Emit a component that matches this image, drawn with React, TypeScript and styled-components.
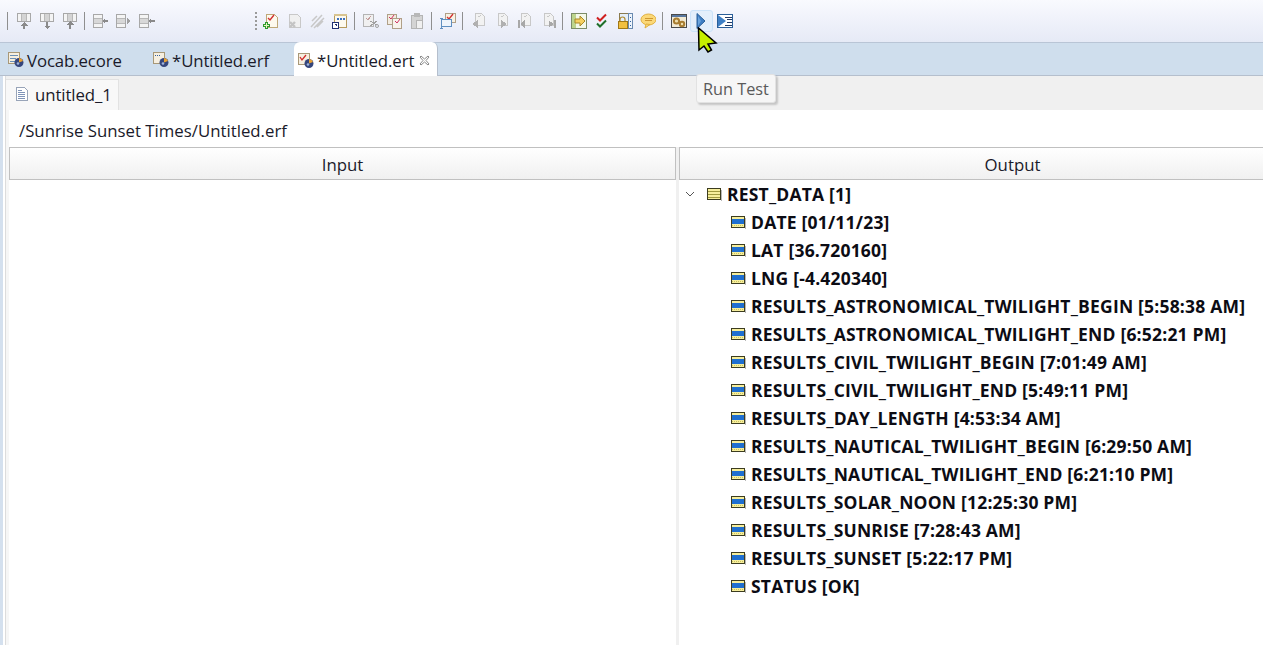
import React from 'react';
import styled, { createGlobalStyle } from 'styled-components';

const GlobalStyle = createGlobalStyle`
  html, body {
    margin: 0;
    padding: 0;
    background: #ffffff;
    overflow: hidden;
  }
  body {
    font-family: 'Open Sans', 'Noto Sans', sans-serif;
  }
`;

const Page = styled.div`
  position: relative;
  width: 1263px;
  height: 645px;
  overflow: hidden;
  display: flex;
  flex-direction: column;
`;

/* TOOLBAR */

const Toolbar = styled.div`
  height: 42px;
  display: flex;
  align-items: center;
  padding: 0 0 0 7px;
  background: linear-gradient(180deg, #f9fafe 0%, #f1f3fb 40%, #e6eaf6 100%);
  border-bottom: 1px solid #b9c5d6;
`;

const Sep = styled.div<{ $first?: boolean }>`
  width: 1px;
  height: 18px;
  background: #8f8f8f;
  margin: 0 4px 0 ${(p) => (p.$first ? '0' : '3px')};
`;

const Grip = styled.div`
  width: 2px;
  height: 18px;
  margin: 0 2px 0 97px;
  background: repeating-linear-gradient(180deg, #9a9a9a 0 2px, transparent 2px 4px);
`;

const ToolButton = styled.div<{ $hover?: boolean }>`
  width: 23px;
  height: 22px;
  box-sizing: border-box;
  display: flex;
  align-items: center;
  justify-content: center;
  border-radius: 3px;
  border: 1px solid ${(p) => (p.$hover ? '#cbe3f9' : 'transparent')};
  background: ${(p) => (p.$hover ? '#e3effb' : 'transparent')};
`;

const Svg = ({ children, size = 16 }: { children: React.ReactNode; size?: number }) => (
  <svg width={size} height={size} viewBox="0 0 16 16" shapeRendering="crispEdges">
    {children}
  </svg>
);

const ColumnsIcon = ({ kind }: { kind: 'up' | 'down' | 'top' }) => (
  <Svg>
    <rect x="1.500" y="0.500" width="13" height="8" fill="#f4f4f4" stroke="#a8a8a8" />
    <path d="M5.500 1v7M10.500 1v7" stroke="#b8b8b8" />
    <rect x="6" y="1" width="4" height="7" fill="#d4d4d4" />
    {kind === 'up' && <path d="M8 9l3.500 3.500H9V16H7v-3.500H4.500z" fill="#8a8a8a" />}
    {kind === 'down' && <path d="M7 9h2v3.500h2.500L8 16l-3.500-3.500H7z" fill="#8a8a8a" />}
    {kind === 'top' && <path d="M8 8l3.500 3.500H9V16H7v-4.500H4.500z" fill="#8a8a8a" />}
  </Svg>
);

const RowsIcon = ({ kind }: { kind: 'left' | 'right' | 'end' }) => (
  <Svg>
    <rect x="0.500" y="1.500" width="9" height="13" fill="#f4f4f4" stroke="#a8a8a8" />
    <path d="M1 5.500h8M1 10.500h8" stroke="#b8b8b8" />
    <rect x="1" y="6" width="8" height="4" fill="#d8d8d8" />
    {kind === 'left' && <path d="M9 8l3-3v2h3v2h-3v2z" fill="#8a8a8a" />}
    {kind === 'right' && <path d="M15 8l-4-3v6z" fill="#a0a0a0" />}
    {kind === 'end' && <path d="M9 8l3-3v2h4v2h-4v2z" fill="#8a8a8a" />}
  </Svg>
);

const PageBase = ({ gray, children }: { gray?: boolean; children?: React.ReactNode }) => (
  <>
    <path
      d="M3.500 1.500h8l3 3v10h-11z"
      fill={gray ? '#f0f0f0' : '#fdf9ee'}
      stroke={gray ? '#c8c8c8' : '#bfa878'}
    />
    {children}
  </>
);

const AddTestIcon = () => (
  <Svg>
    <PageBase />
    <path d="M5 5l2 2 4-5" fill="none" stroke="#d03030" strokeWidth="1.400" shapeRendering="auto" />
    <path d="M2 9h3v2h2v3H5v2H2v-2H0v-3h2z" fill="#2f9a2f" />
    <path d="M3 10h1v2h2v1H4v2H3v-2H1v-1h2z" fill="#e8f8c0" />
  </Svg>
);

const GrayDeleteIcon = () => (
  <Svg>
    <PageBase gray />
    <path d="M4 9l5 5M9 9l-5 5" stroke="#c4c4c4" strokeWidth="2.400" shapeRendering="auto" />
  </Svg>
);

const GrayFeatherIcon = () => (
  <Svg>
    <path
      d="M2 14L13 2M5 15l10-10M3 8l5-5M8 14l6-6"
      stroke="#c8c8c8"
      strokeWidth="1.500"
      fill="none"
      shapeRendering="auto"
    />
  </Svg>
);

const ImportPageIcon = () => (
  <Svg>
    <rect x="2.500" y="1.500" width="12" height="13" fill="#fdf9ee" stroke="#b69a5c" />
    <rect x="2" y="1" width="13" height="2" fill="#d8c490" />
    <rect x="5" y="5" width="2" height="2" fill="#3a6fc0" />
    <rect x="8" y="5" width="2" height="2" fill="#3a6fc0" />
    <rect x="11" y="5" width="2" height="2" fill="#3a6fc0" />
    <rect x="0.500" y="9.500" width="6" height="6" fill="#ffffff" stroke="#1f2f70" />
    <path d="M2 11h3v3z" fill="#1f2f70" />
  </Svg>
);

const GrayCutIcon = () => (
  <Svg>
    <rect x="0.500" y="1.500" width="10" height="12" fill="#f0f0f0" stroke="#b4b4b4" />
    <path d="M3 5l2 2 3-4" stroke="#c49a9a" fill="none" />
    <path d="M7 8l7 4M7 13l7-5" stroke="#a0a0a0" />
    <circle cx="14" cy="13" r="1.500" fill="none" stroke="#a0a0a0" shapeRendering="auto" />
  </Svg>
);

const CopyIcon = () => (
  <Svg>
    <rect x="1.500" y="1.500" width="9" height="10" fill="#f3ece0" stroke="#b0a088" />
    <rect x="6.500" y="5.500" width="9" height="10" fill="#f8f4ec" stroke="#b0a088" />
    <path d="M3 4l2 2 3-4M9 8l2 2 3-4" stroke="#d03060" fill="none" shapeRendering="auto" />
  </Svg>
);

const GrayPasteIcon = () => (
  <Svg>
    <rect x="2.500" y="2.500" width="11" height="13" fill="#d4d4d4" stroke="#b4b4b4" />
    <rect x="5" y="0" width="6" height="4" fill="#b8b8b8" />
    <rect x="7.500" y="7.500" width="6" height="8" fill="#f0f0f0" stroke="#b4b4b4" />
  </Svg>
);

const NewSuiteIcon = () => (
  <Svg>
    <rect x="5.500" y="0.500" width="10" height="9" fill="#f8f2e4" stroke="#b0a088" />
    <path d="M7 4l2 2 4-5" stroke="#d03030" fill="none" strokeWidth="1.300" shapeRendering="auto" />
    <rect x="1.500" y="6.500" width="10" height="7" fill="#eef4fb" stroke="#5f8fc0" />
    <path d="M0 5.500h3M1.500 5.500v10M0 15.500h3" stroke="#5f8fc0" />
  </Svg>
);

const NavIcon = ({ kind }: { kind: 'prev' | 'next' | 'first' | 'last' }) => (
  <Svg>
    <path d="M4.500 0.500h6l3 3v9h-9z" fill="#f2f2f2" stroke="#c8c8c8" />
    <path d="M7 3l1 1 2-2" stroke="#c8c8c8" fill="none" />
    {kind === 'prev' && <path d="M1 11l6-4v8z" fill="#b0b0b0" />}
    {kind === 'next' && <path d="M13 11L7 7v8z" fill="#b0b0b0" />}
    {kind === 'first' && <path d="M1 7h1.500v8H1zM3 11l5-4v8z" fill="#a8a8a8" />}
    {kind === 'last' && <path d="M14 7h1.500v8H14zM13.500 11l-5-4v8z" fill="#a8a8a8" />}
  </Svg>
);

const GotoIcon = () => (
  <Svg>
    <rect x="0.500" y="0.500" width="15" height="15" fill="#f4f8e8" stroke="#7c8c68" />
    <rect x="1" y="1" width="4" height="14" fill="#bcd48c" />
    <path d="M4 6h5V3l5 5-5 5v-3H4z" fill="#f6d060" stroke="#a88828" shapeRendering="auto" />
  </Svg>
);

const ChecksIcon = () => (
  <Svg>
    <path d="M3 4.500l3 3 6-6" stroke="#d02020" strokeWidth="2" fill="none" shapeRendering="auto" />
    <path d="M3 10.500l3 3 6-6" stroke="#1f6f2a" strokeWidth="2" fill="none" shapeRendering="auto" />
  </Svg>
);

const LockIcon = () => (
  <Svg>
    <rect x="2.500" y="0.500" width="9" height="9" fill="#e4eef8" stroke="#8a7a50" />
    <rect x="11.500" y="0.500" width="4" height="15" fill="#eef4fb" stroke="#6a8ab0" />
    <path d="M13 4h1M13 8h1M13 12h1" stroke="#3060a0" />
    <path
      d="M3 8V6.500a2.500 2.500 0 015 0V8"
      fill="none"
      stroke="#b08a30"
      strokeWidth="1.200"
      shapeRendering="auto"
    />
    <rect x="1" y="8" width="9" height="7" fill="#f2c040" stroke="#a07818" />
  </Svg>
);

const BubbleIcon = () => (
  <Svg>
    <ellipse cx="8.500" cy="6.500" rx="7.500" ry="5.500" fill="#fbd878" stroke="#e0b040" shapeRendering="auto" />
    <path d="M6 11l-1 4 5-3.500z" fill="#fbd878" stroke="#e0b040" shapeRendering="auto" />
    <path d="M5 5h8M5 7.500h7" stroke="#d09830" />
  </Svg>
);

const GearsIcon = () => (
  <Svg>
    <rect x="0.500" y="1.500" width="15" height="13" fill="#f2ead4" stroke="#4a4a4a" />
    <rect x="1" y="2" width="14" height="2" fill="#5a78a0" />
    <circle cx="5.500" cy="8" r="2.600" fill="#f0e0b0" stroke="#a87c30" strokeWidth="2" shapeRendering="auto" />
    <circle cx="11" cy="11" r="2.200" fill="#f0e0b0" stroke="#a87c30" strokeWidth="2" shapeRendering="auto" />
  </Svg>
);

const PlayIcon = () => (
  <Svg>
    <path d="M3 0.500L11 8 3 15.500z" fill="#3f7fc4" stroke="#2a6099" shapeRendering="auto" />
    <path d="M4 3v10l3-5z" fill="#6aa4dc" shapeRendering="auto" />
  </Svg>
);

const PlayListIcon = () => (
  <Svg>
    <rect x="0.500" y="1.500" width="15" height="13" fill="#ffffff" stroke="#2a5f99" />
    <path d="M1 2l8 6-8 6z" fill="#3f7fc4" shapeRendering="auto" />
    <path d="M8 4h7M10 6.500h5M10 9.500h5M8 12h7" stroke="#223a66" />
  </Svg>
);

/* EDITOR TABS */

const TabBar = styled.div`
  height: 33px;
  background: #cfdeed;
  border-bottom: 1px solid #b5bfcd;
  box-sizing: border-box;
  display: flex;
  align-items: flex-end;
  padding-left: 3px;
`;

const EditorTab = styled.div<{ $active?: boolean; $w: number }>`
  width: ${(p) => p.$w}px;
  height: 33px;
  box-sizing: border-box;
  display: flex;
  align-items: center;
  gap: 3px;
  padding: 3px 0 0 ${(p) => (p.$active ? 4 : 5)}px;
  font-size: 16.800px;
  letter-spacing: -0.100px;
  color: #1a1a2a;
  background: ${(p) => (p.$active ? '#ffffff' : 'transparent')};
  border-radius: ${(p) => (p.$active ? '6px 6px 0 0' : '0')};
  ${(p) => (p.$active ? 'border-right: 1px solid #b5bfcd; margin-bottom: -1px; height: 34px;' : '')}
`;

const TabGap = styled.div<{ $w: number }>`
  width: ${(p) => p.$w}px;
`;

const CloseBox = styled.span`
  display: flex;
  margin-left: 2px;
`;

const ModelIcon = ({ variant }: { variant: 'ecore' | 'erf' | 'ert' }) => (
  <Svg>
    <rect x="0.500" y="0.500" width="11" height="11" fill="#f6efe0" stroke="#a89878" />
    {variant === 'ecore' && <path d="M2 3h8M2 6h6M2 9h5" stroke="#6a90b8" />}
    {variant === 'erf' && <path d="M2 3h1M4 3h1M6 3h1" stroke="#3060a0" />}
    {variant === 'ert' && (
      <path d="M2 4l2 3 4-5" stroke="#d02828" strokeWidth="1.300" fill="none" shapeRendering="auto" />
    )}
    <circle cx="11" cy="10.500" r="4.500" fill="#35467c" shapeRendering="auto" />
    <path d="M11 10.500V6a4.500 4.500 0 014 3z" fill="#e8a030" shapeRendering="auto" />
    <circle cx="10" cy="11.500" r="1.300" fill="#9fb4dc" shapeRendering="auto" />
  </Svg>
);

const CloseIcon = () => (
  <svg width="11" height="11" viewBox="0 0 11 11">
    <path
      d="M1 2l1-1 3.500 3L9 1l1 1-3 3.500L10 9l-1 1-3.500-3L2 10 1 9l3-3.500z"
      fill="#ffffff"
      stroke="#8a8a8a"
    />
  </svg>
);

/* EDITOR BODY */

const EditorFrame = styled.div`
  flex: 1;
  min-height: 0;
  display: flex;
  border-left: 3px solid #d4e0ee;
  padding-left: 2px;
`;

const EditorInner = styled.div`
  flex: 1;
  min-width: 0;
  display: flex;
  flex-direction: column;
  border-left: 1px solid #dcdcdc;
`;

const SubTabRow = styled.div`
  height: 34px;
  flex-shrink: 0;
  box-sizing: border-box;
  background: #f0f0f0;
  padding-top: 3px;
  display: flex;
`;

const SubTab = styled.div`
  width: 113px;
  box-sizing: border-box;
  background: #f8f8f8;
  border-right: 1px solid #e2e2e2;
  border-top: 1px solid #e2e2e2;
  display: flex;
  align-items: center;
  gap: 6px;
  padding: 0 0 2px 9px;
  font-size: 16.800px;
  letter-spacing: -0.100px;
  color: #1a1a2a;
`;

const DocIcon = () => (
  <svg width="14" height="16" viewBox="0 0 14 16" shapeRendering="crispEdges">
    <path d="M1.500 1.500h8l3 3v10h-11z" fill="#ffffff" stroke="#98a4b8" />
    <path d="M3 6h7M3 8h7M3 10h7M3 12h7M3 4h4" stroke="#7f94b8" />
  </svg>
);

const Content = styled.div`
  flex: 1;
  min-height: 0;
  display: flex;
  flex-direction: column;
  border-left: 3px solid #f6f6f6;
  background: #ffffff;
`;

const PathLine = styled.div`
  height: 37px;
  flex-shrink: 0;
  display: flex;
  align-items: center;
  padding: 4px 0 0 10px;
  box-sizing: border-box;
  font-size: 16.800px;
  color: #1a1a2a;
`;

const Panes = styled.div`
  flex: 1;
  min-height: 0;
  display: grid;
  grid-template-columns: 667px 3px 1fr;
  overflow: hidden;
`;

const Pane = styled.div`
  display: flex;
  flex-direction: column;
  min-width: 0;
`;

const Sash = styled.div`
  background: #f0f0f0;
`;

const PaneHeader = styled.div`
  width: 667px;
  height: 33px;
  flex-shrink: 0;
  box-sizing: border-box;
  display: flex;
  align-items: center;
  justify-content: center;
  padding-top: 1px;
  border: 1px solid #c0c0c0;
  background: linear-gradient(180deg, #ffffff 0%, #f0f0f0 100%);
  font-size: 16.800px;
  color: #1a1a2a;
`;

const TreeRow = styled.div<{ $level: number }>`
  height: 28px;
  display: flex;
  align-items: center;
  gap: 5px;
  padding-left: ${(p) => (p.$level === 0 ? 28 : 52)}px;
  font-size: 17.500px;
  font-weight: 700;
  letter-spacing: 0.200px;
  color: #0c0c14;
  white-space: nowrap;
`;

const Chevron = styled.svg`
  position: absolute;
  margin-left: -22px;
`;

const FieldIcon = ({ root }: { root?: boolean }) => (
  <svg width="15" height="13" viewBox="0 0 15 13" shapeRendering="crispEdges">
    <rect x="0.500" y="0.500" width="13" height="11" fill="#f6ee9c" stroke="#3c3c20" />
    {root ? (
      <path d="M1 3.500h12M1 6.500h12M1 9.500h12" stroke="#a09a40" />
    ) : (
      <>
        <rect x="1" y="3" width="12" height="5" fill="#1f6fd0" />
        <path d="M1 9.500h12" stroke="#c8c060" strokeDasharray="1 1" />
      </>
    )}
    <path d="M14 2v11H2" fill="none" stroke="#b8b8b8" />
  </svg>
);

/* OVERLAYS */

const Tooltip = styled.div`
  position: absolute;
  left: 696px;
  top: 74px;
  height: 29px;
  box-sizing: border-box;
  padding: 0 6px;
  display: flex;
  align-items: center;
  background: #f6f6f6;
  border: 1px solid #e2e2e2;
  border-radius: 3px;
  box-shadow: 2px 2px 2px rgba(0, 0, 0, 0.18);
  font-size: 16.300px;
  color: #5a5a5a;
`;

const Cursor = styled.svg`
  position: absolute;
  left: 697px;
  top: 27px;
`;

const fields = [
  'DATE [01/11/23]',
  'LAT [36.720160]',
  'LNG [-4.420340]',
  'RESULTS_ASTRONOMICAL_TWILIGHT_BEGIN [5:58:38 AM]',
  'RESULTS_ASTRONOMICAL_TWILIGHT_END [6:52:21 PM]',
  'RESULTS_CIVIL_TWILIGHT_BEGIN [7:01:49 AM]',
  'RESULTS_CIVIL_TWILIGHT_END [5:49:11 PM]',
  'RESULTS_DAY_LENGTH [4:53:34 AM]',
  'RESULTS_NAUTICAL_TWILIGHT_BEGIN [6:29:50 AM]',
  'RESULTS_NAUTICAL_TWILIGHT_END [6:21:10 PM]',
  'RESULTS_SOLAR_NOON [12:25:30 PM]',
  'RESULTS_SUNRISE [7:28:43 AM]',
  'RESULTS_SUNSET [5:22:17 PM]',
  'STATUS [OK]',
];

const App = () => {
  return (
    <Page>
      <GlobalStyle />

      <Toolbar>
        <Sep $first />
        <ToolButton><ColumnsIcon kind="up" /></ToolButton>
        <ToolButton><ColumnsIcon kind="down" /></ToolButton>
        <ToolButton><ColumnsIcon kind="top" /></ToolButton>
        <Sep />
        <ToolButton><RowsIcon kind="left" /></ToolButton>
        <ToolButton><RowsIcon kind="right" /></ToolButton>
        <ToolButton><RowsIcon kind="end" /></ToolButton>
        <Grip />
        <ToolButton><AddTestIcon /></ToolButton>
        <ToolButton><GrayDeleteIcon /></ToolButton>
        <ToolButton><GrayFeatherIcon /></ToolButton>
        <ToolButton><ImportPageIcon /></ToolButton>
        <Sep />
        <ToolButton><GrayCutIcon /></ToolButton>
        <ToolButton><CopyIcon /></ToolButton>
        <ToolButton><GrayPasteIcon /></ToolButton>
        <Sep />
        <ToolButton><NewSuiteIcon /></ToolButton>
        <Sep />
        <ToolButton><NavIcon kind="prev" /></ToolButton>
        <ToolButton><NavIcon kind="next" /></ToolButton>
        <ToolButton><NavIcon kind="first" /></ToolButton>
        <ToolButton><NavIcon kind="last" /></ToolButton>
        <Sep />
        <ToolButton><GotoIcon /></ToolButton>
        <ToolButton><ChecksIcon /></ToolButton>
        <ToolButton><LockIcon /></ToolButton>
        <ToolButton><BubbleIcon /></ToolButton>
        <Sep />
        <ToolButton><GearsIcon /></ToolButton>
        <ToolButton $hover><PlayIcon /></ToolButton>
        <ToolButton><PlayListIcon /></ToolButton>
      </Toolbar>

      <TabBar>
        <EditorTab $w={138}><ModelIcon variant="ecore" />Vocab.ecore</EditorTab>
        <TabGap $w={7} />
        <EditorTab $w={146}><ModelIcon variant="erf" />*Untitled.erf</EditorTab>
        <EditorTab $active $w={144}>
          <ModelIcon variant="ert" />*Untitled.ert
          <CloseBox><CloseIcon /></CloseBox>
        </EditorTab>
      </TabBar>

      <EditorFrame>
        <EditorInner>
          <SubTabRow>
            <SubTab><DocIcon />untitled_1</SubTab>
          </SubTabRow>
          <Content>
            <PathLine>/Sunrise Sunset Times/Untitled.erf</PathLine>
            <Panes>
              <Pane>
                <PaneHeader>Input</PaneHeader>
              </Pane>
              <Sash />
              <Pane>
                <PaneHeader>Output</PaneHeader>
                <div>
                  <TreeRow $level={0}>
                    <Chevron width="10" height="6" viewBox="0 0 10 6">
                      <path d="M1 1l4 4 4-4" fill="none" stroke="#555" />
                    </Chevron>
                    <FieldIcon root />REST_DATA [1]
                  </TreeRow>
                  {fields.map((f) => (
                    <TreeRow key={f} $level={1}>
                      <FieldIcon />{f}
                    </TreeRow>
                  ))}
                </div>
              </Pane>
            </Panes>
          </Content>
        </EditorInner>
      </EditorFrame>

      <Tooltip>Run Test</Tooltip>
      <Cursor width="22" height="28" viewBox="0 0 22 28">
        <path
          d="M1.500 1L2 23l5-4 4 6 3.500-2-3.500-6 8-1z"
          fill="#c6f000"
          stroke="#000000"
          strokeWidth="1.500"
        />
      </Cursor>
    </Page>
  );
};

export default App;
